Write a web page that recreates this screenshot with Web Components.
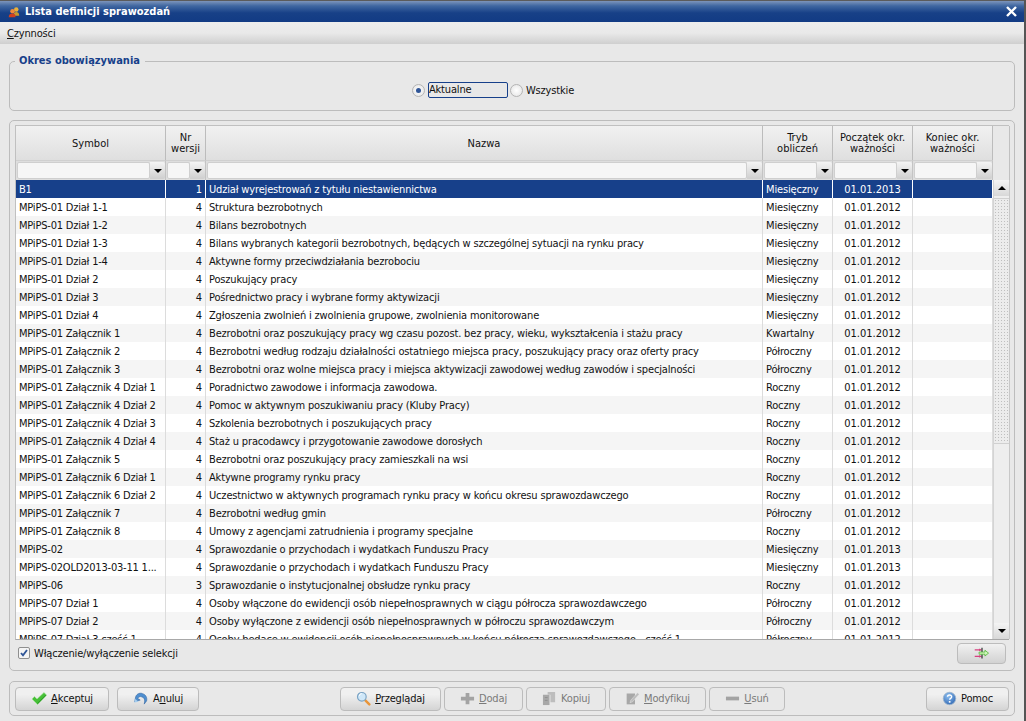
<!DOCTYPE html>
<html lang="pl">
<head>
<meta charset="utf-8">
<title>Lista definicji sprawozdań</title>
<style>
  html, body { margin: 0; height: 100%; overflow: hidden; }
  body { font: 11px "DejaVu Sans Condensed", "DejaVu Sans", sans-serif; letter-spacing: -.16px; color: #111; background: #e8e8e8; }
</style>
</head>
<body>
<report-window>
  <group-box slot="period" legend="Okres obowiązywania">
    <period-switch></period-switch>
  </group-box>
  <group-box slot="list">
    <report-table></report-table>
  </group-box>
  <action-bar slot="actions"></action-bar>
</report-window>

<script>
const ICONS = {
  ok: '<svg width="16" height="13" viewBox="0 0 16 13"><path d="M1 7l2.5-2.5L6 7l7-6.500 2.500 2.500L6.500 12.500z" fill="#47c038" stroke="#a6e09a" stroke-width=".6"/><path d="M6.500 11L14.500 3l1 .3-9 9z" fill="#2a9a24"/></svg>',
  undo: '<svg width="16" height="15" viewBox="0 0 20 18"><path d="M3 9c0-5 5-8 9-6 4 1 6 5 5 9l-3 4c1-4 1-8-3-9-2-1-4 0-5 2l3 2-7 2z" fill="#4f8fd0" stroke="#2b609e" stroke-width=".7"/><path d="M2 9v5l5-1z" fill="#a5cdee"/></svg>',
  search: '<svg width="15" height="15" viewBox="0 0 18 18"><path d="M10 10l6 6" stroke="#e8953a" stroke-width="3" stroke-linecap="round"/><circle cx="7" cy="7" r="5.200" fill="#cfe7f8" stroke="#7aa3c4" stroke-width="1.400"/><path d="M4 6a3 3 0 0 1 3-3" stroke="#fff" fill="none"/></svg>',
  plus: '<svg width="15" height="15" viewBox="0 0 16 16"><path d="M6 2h4v4h5v4h-5v4H6v-4H1V6h5z" fill="#a3a3a3"/></svg>',
  copy: '<svg width="15" height="15" viewBox="0 0 16 16"><path d="M1 4h7v11H1z" fill="#a8a8a8"/><path d="M6 1h8v11H9V4H6z" fill="#bdbdbd"/><path d="M3 7h3M3 10h3" stroke="#8e8e8e"/></svg>',
  edit: '<svg width="15" height="15" viewBox="0 0 18 18"><path d="M2 3h10v13H2z" fill="#a8a8a8"/><path d="M7 11l8-9 2 2-8 9-3 1z" fill="#bdbdbd" stroke="#e6e6e6" stroke-width=".6"/></svg>',
  minus: '<svg width="15" height="15" viewBox="0 0 16 16"><path d="M1 6h14v4H1z" fill="#a3a3a3"/></svg>',
  help: '<svg width="15" height="15" viewBox="0 0 18 18"><defs><radialGradient id="h" cx=".4" cy=".3" r=".8"><stop offset="0" stop-color="#8fc0f0"/><stop offset="1" stop-color="#2a62b0"/></radialGradient></defs><circle cx="9" cy="9" r="7.500" fill="url(#h)" stroke="#9cb4cc"/><path d="M6.600 7c0-3 5-3 5 0 0 2-2.400 1.600-2.400 3.400" fill="none" stroke="#fff" stroke-width="1.600"/><path d="M8.200 12h2v2h-2z" fill="#fff"/></svg>',
  toggle: '<svg width="16" height="15" viewBox="0 0 22 18"><path d="M1 4h9M1 13h9" stroke="#d6417f" stroke-width="1.500"/><path d="M7 2l3 2-3 2zM7 11l3 2-3 2z" fill="#d6417f"/><path d="M11 1v6M11 10v6" stroke="#111" stroke-width="1.400"/><path d="M7 7h8V4.500l5 4-5 4V10H7z" fill="#cdf5b8" stroke="#48b02e"/></svg>',
  app: '<svg width="12" height="12" viewBox="0 0 16 16"><circle cx="11" cy="4.500" r="3" fill="#e8b13a"/><path d="M7 13c0-4 2-5 4-5s4 1 4 5z" fill="#c99a2e"/><circle cx="6" cy="7" r="3" fill="#f08a3a"/><path d="M1 15c0-4 2-5 5-5s4 1 4 5z" fill="#d0401f"/></svg>'
};

class ReportWindow extends HTMLElement {
  constructor() {
    super();
    this.attachShadow({ mode: 'open' });
    this.shadowRoot.innerHTML = `
      <style>
        :host { display: flex; flex-direction: column; width: 1026px; height: 721px; background: #e8e8e8; box-sizing: border-box; border-right: 2px solid #555; }
        .title {
          height: 22px; flex: none; box-sizing: border-box; border-top: 1px solid #5b5b5b;
          display: flex; align-items: center; padding: 0 7px 0 8px; gap: 5px;
          background: linear-gradient(#7d95bb 0, #3f66a0 5px, #174087 12px, #123b84 100%);
          color: #fff; font-weight: bold; font-size: 11px; letter-spacing: 0;
        }
        .title svg { flex: none; }
        .title span { flex: 1; }
        .close { flex: none; margin-right: 0; }
        .menu {
          height: 22px; flex: none; display: flex; align-items: center; padding: 0 7px;
          background: linear-gradient(#ededed 0, #e9e9e9 50%, #cfcfcf 100%);
        }
        u { text-underline-offset: 1px; }
        .body { flex: 1; display: flex; flex-direction: column; padding: 17px 9px 6px 9px; }
        ::slotted([slot=period]) { height: 50px; flex: none; }
        ::slotted([slot=list]) { height: 551px; margin-top: 9px; flex: none; }
        ::slotted([slot=actions]) { margin-top: 10px; flex: none; }
      </style>
      <div class="title">
        ${ICONS.app}
        <span>Lista definicji sprawozdań</span>
        <svg class="close" width="11" height="11" viewBox="0 0 11 11"><path d="M1 1l9 9M10 1l-9 9" stroke="#fff" stroke-width="2.400"/></svg>
      </div>
      <div class="menu"><span><u>C</u>zynności</span></div>
      <div class="body">
        <slot name="period"></slot>
        <slot name="list"></slot>
        <slot name="actions"></slot>
      </div>`;
  }
}

class GroupBox extends HTMLElement {
  constructor() {
    super();
    this.attachShadow({ mode: 'open' });
    const legend = this.getAttribute('legend');
    this.shadowRoot.innerHTML = `
      <style>
        :host { display: block; position: relative; box-sizing: border-box; border: 1px solid #bcbcbc; border-radius: 5px; }
        .legend { position: absolute; left: 5px; top: -8px; padding: 0 5px 0 4px; background: #e8e8e8; color: #17408a; font-weight: bold; font-size: 11px; line-height: 14px; letter-spacing: 0; }
      </style>
      ${legend ? `<div class="legend">${legend}</div>` : ''}
      <slot></slot>`;
  }
}

class PeriodSwitch extends HTMLElement {
  constructor() {
    super();
    this.attachShadow({ mode: 'open' });
    this.shadowRoot.innerHTML = `
      <style>
        :host { display: flex; height: 100%; align-items: center; justify-content: center; padding: 8px 38px 0 0; box-sizing: border-box; }
        .radio { width: 11px; height: 11px; border-radius: 50%; border: 1px solid #b4b4b4; background: radial-gradient(#fff, #e2e2e2); display: flex; align-items: center; justify-content: center; flex: none; }
        .radio i { width: 5px; height: 5px; border-radius: 50%; background: #2f5597; }
        .focus { width: 78px; height: 14px; line-height: 14px; border: 1px solid #17408a; border-radius: 2px; margin: 0 2px 0 3px; box-sizing: content-box; }
        .rest { margin-left: 3px; }
      </style>
      <span class="radio"><i></i></span>
      <span class="focus">Aktualne</span>
      <span class="radio"></span>
      <span class="rest">Wszystkie</span>`;
  }
}

const COLS = '150px 40px 557px 70px 80px 80px';
const ROWS = [
  ['B1',1,'Udział wyrejestrowań z tytułu niestawiennictwa','Miesięczny','01.01.2013'],
  ['MPiPS-01 Dział 1-1',4,'Struktura bezrobotnych','Miesięczny','01.01.2012'],
  ['MPiPS-01 Dział 1-2',4,'Bilans bezrobotnych','Miesięczny','01.01.2012'],
  ['MPiPS-01 Dział 1-3',4,'Bilans wybranych kategorii bezrobotnych, będących w szczególnej sytuacji na rynku pracy','Miesięczny','01.01.2012'],
  ['MPiPS-01 Dział 1-4',4,'Aktywne formy przeciwdziałania bezrobociu','Miesięczny','01.01.2012'],
  ['MPiPS-01 Dział 2',4,'Poszukujący pracy','Miesięczny','01.01.2012'],
  ['MPiPS-01 Dział 3',4,'Pośrednictwo pracy i wybrane formy aktywizacji','Miesięczny','01.01.2012'],
  ['MPiPS-01 Dział 4',4,'Zgłoszenia zwolnień i zwolnienia grupowe, zwolnienia monitorowane','Miesięczny','01.01.2012'],
  ['MPiPS-01 Załącznik 1',4,'Bezrobotni oraz poszukujący pracy wg czasu pozost. bez pracy, wieku, wykształcenia i stażu pracy','Kwartalny','01.01.2012'],
  ['MPiPS-01 Załącznik 2',4,'Bezrobotni według rodzaju działalności ostatniego miejsca pracy, poszukujący pracy oraz oferty pracy','Półroczny','01.01.2012'],
  ['MPiPS-01 Załącznik 3',4,'Bezrobotni oraz wolne miejsca pracy i miejsca aktywizacji zawodowej według zawodów i specjalności','Półroczny','01.01.2012'],
  ['MPiPS-01 Załącznik 4 Dział 1',4,'Poradnictwo zawodowe i informacja zawodowa.','Roczny','01.01.2012'],
  ['MPiPS-01 Załącznik 4 Dział 2',4,'Pomoc w aktywnym poszukiwaniu pracy (Kluby Pracy)','Roczny','01.01.2012'],
  ['MPiPS-01 Załącznik 4 Dział 3',4,'Szkolenia bezrobotnych i poszukujących pracy','Roczny','01.01.2012'],
  ['MPiPS-01 Załącznik 4 Dział 4',4,'Staż u pracodawcy i przygotowanie zawodowe dorosłych','Roczny','01.01.2012'],
  ['MPiPS-01 Załącznik 5',4,'Bezrobotni oraz poszukujący pracy zamieszkali na wsi','Roczny','01.01.2012'],
  ['MPiPS-01 Załącznik 6 Dział 1',4,'Aktywne programy rynku pracy','Roczny','01.01.2012'],
  ['MPiPS-01 Załącznik 6 Dział 2',4,'Uczestnictwo w aktywnych programach rynku pracy w końcu okresu sprawozdawczego','Roczny','01.01.2012'],
  ['MPiPS-01 Załącznik 7',4,'Bezrobotni według gmin','Półroczny','01.01.2012'],
  ['MPiPS-01 Załącznik 8',4,'Umowy z agencjami zatrudnienia i programy specjalne','Roczny','01.01.2012'],
  ['MPiPS-02',4,'Sprawozdanie o przychodach i wydatkach Funduszu Pracy','Miesięczny','01.01.2013'],
  ['MPiPS-02OLD2013-03-11 1...',4,'Sprawozdanie o przychodach i wydatkach Funduszu Pracy','Miesięczny','01.01.2013'],
  ['MPiPS-06',3,'Sprawozdanie o instytucjonalnej obsłudze rynku pracy','Roczny','01.01.2012'],
  ['MPiPS-07 Dział 1',4,'Osoby włączone do ewidencji osób niepełnosprawnych w ciągu półrocza sprawozdawczego','Półroczny','01.01.2012'],
  ['MPiPS-07 Dział 2',4,'Osoby wyłączone z ewidencji osób niepełnosprawnych w półroczu sprawozdawczym','Półroczny','01.01.2012'],
  ['MPiPS-07 Dział 3 część 1',4,'Osoby będące w ewidencji osób niepełnosprawnych w końcu półrocza sprawozdawczego - część 1','Półroczny','01.01.2012']
];
const HEADS = ['Symbol', 'Nr<br>wersji', 'Nazwa', 'Tryb<br>obliczeń', 'Początek okr.<br>ważności', 'Koniec okr.<br>ważności'];

class ReportTable extends HTMLElement {
  constructor() {
    super();
    this.attachShadow({ mode: 'open' });
    this.shadowRoot.innerHTML = `
      <style>
        :host { display: flex; flex-direction: column; height: 100%; padding: 4px 5px 3px 5px; box-sizing: border-box; }
        .frame { display: grid; grid-template-columns: 977px 17px; grid-template-rows: 34px 20px 459px; border: 1px solid #c0c0c0; border-bottom: 1px solid #a8a8a8; border-right: 0; flex: none; }
        .heads, .filters, .row { display: grid; grid-template-columns: ${COLS}; }
        .heads { grid-area: 1 / 1; }
        .filters { grid-area: 2 / 1; }
        .corner { grid-area: 1 / 2 / span 2; background: #e8e8e8; border-right: 1px solid #c0c0c0; }
        .head { display: flex; align-items: center; justify-content: center; text-align: center; line-height: 11px; letter-spacing: 0; background: linear-gradient(#f1f1f1, #dfdfdf); border-right: 1px solid #bcbcbc; }
        .filter { display: flex; background: #dedede; padding: 1px 0 1px 1px; border-right: 1px solid #c4c4c4; box-sizing: border-box; border-top: 1px solid #d0d0d0; }
        .filter i { flex: 1; min-width: 0; background: #f6f6f6; border: 1px solid #cfcfcf; border-radius: 2px; }
        .filter b { width: 15px; flex: none; background: linear-gradient(#f4f4f4, #cfcfcf); display: flex; align-items: center; justify-content: center; border-radius: 0 2px 2px 0; }
        .filter b::after, .down::after { content: ""; border: 4px solid transparent; border-top: 4px solid #000; border-bottom: 0; }
        .rows { grid-area: 3 / 1; overflow: hidden; background: #fff; }
        .row { height: 18px; line-height: 18px; background: #fff; }
        .row:nth-child(odd) { background: #f5f5f5; }
        .row span { padding: 1px 3px 0; white-space: nowrap; overflow: hidden; border-right: 1px solid #dcdcdc; box-sizing: border-box; }
        .row span:first-child { letter-spacing: -.2px; }
        .row .n { text-align: right; }
        .row .c { text-align: center; letter-spacing: 0; }
        .row.sel, .row.sel:nth-child(odd) { background: #17408a; color: #fff; }
        .row.sel span { border-right-color: #fff; }
        .bar { grid-area: 3 / 2; display: flex; flex-direction: column; background: #eeeeee; border-left: 1px solid #d4d4d4; border-right: 1px solid #c8c8c8; box-sizing: border-box; }
        .btn { height: 16px; flex: none; background: linear-gradient(#f4f4f4, #d8d8d8); display: flex; align-items: center; justify-content: center; }
        .up::after { content: ""; border: 4px solid transparent; border-bottom: 4px solid #000; border-top: 0; }
        .thumb { height: 244px; margin-top: 2px; flex: none; border: 1px solid #d0d0d0; border-width: 1px 0; background-color: #ececec; background-image: radial-gradient(#bfbfbf .6px, transparent .7px); background-size: 3px 3px; }
        .gap { flex: 1; }
        .foot { display: flex; align-items: center; justify-content: space-between; padding: 0 0 0 3px; height: 26px; box-sizing: border-box; flex: none; }
        .check { display: flex; align-items: center; gap: 4px; }
        .box { width: 10px; height: 10px; border: 1px solid #8f8f8f; border-radius: 2px; background: #f4f4f4; display: flex; }
        .tog { width: 49px; height: 21px; margin-right: 3px; box-sizing: border-box; border: 1px solid #bcbcbc; border-radius: 4px; background: linear-gradient(#f1f1f1, #d2d2d2); display: flex; align-items: center; justify-content: center; }
      </style>
      <div class="frame">
        <div class="heads">${HEADS.map(h => `<div class="head"><span>${h}</span></div>`).join('')}</div>
        <div class="corner"></div>
        <div class="filters">${HEADS.map(() => '<div class="filter"><i></i><b></b></div>').join('')}</div>
        <div class="rows">${ROWS.map((r, i) => `
          <div class="row${i === 0 ? ' sel' : ''}">
            <span>${r[0]}</span><span class="n">${r[1]}</span><span>${r[2]}</span><span>${r[3]}</span><span class="c">${r[4]}</span><span></span>
          </div>`).join('')}</div>
        <div class="bar">
          <div class="btn up"></div>
          <div class="thumb"></div>
          <div class="gap"></div>
          <div class="btn down"></div>
        </div>
      </div>
      <div class="foot">
        <div class="check">
          <span class="box"><svg width="10" height="10" viewBox="0 0 10 10"><path d="M2 5l2 2.400L8 2" fill="none" stroke="#2f5597" stroke-width="1.800"/></svg></span>
          <span>Włączenie/wyłączenie selekcji</span>
        </div>
        <div class="tog">${ICONS.toggle}</div>
      </div>`;
  }
}

class ToolButton extends HTMLElement {
  constructor() {
    super();
    this.attachShadow({ mode: 'open' });
    this.shadowRoot.innerHTML = `
      <style>
        :host { display: inline-flex; align-items: center; justify-content: center; gap: 4px; box-sizing: border-box; height: 24px; border: 1px solid #bcbcbc; border-radius: 4px; background: linear-gradient(#f0f0f0, #f0f0f0 30%, #d4d4d4); }
        :host([disabled]) { background: #e8e8e8; color: #7a7a7a; }
        ::slotted(u) { text-underline-offset: 1px; }
        svg { display: block; }
      </style>
      ${ICONS[this.getAttribute('icon')] || ''}
      <span><slot></slot></span>`;
  }
}

class ActionBar extends HTMLElement {
  constructor() {
    super();
    this.attachShadow({ mode: 'open' });
    this.shadowRoot.innerHTML = `
      <style>
        :host { display: flex; align-items: center; height: 35px; box-sizing: border-box; border: 1px solid #bcbcbc; border-radius: 5px; padding: 0 5px; }
        .left, .mid { display: flex; gap: 8px; }
        .mid { gap: 3px; margin-left: 141px; }
        .end { margin-left: auto; }
      </style>
      <div class="left">
        <tool-button icon="ok" style="width:94px"><u>A</u>kceptuj</tool-button>
        <tool-button icon="undo" style="width:82px">A<u>n</u>uluj</tool-button>
      </div>
      <div class="mid">
        <tool-button icon="search" style="width:101px"><u>P</u>rzeglądaj</tool-button>
        <tool-button icon="plus" disabled style="width:79px"><u>D</u>odaj</tool-button>
        <tool-button icon="copy" disabled style="width:80px">Kopiuj</tool-button>
        <tool-button icon="edit" disabled style="width:97px"><u>M</u>odyfikuj</tool-button>
        <tool-button icon="minus" disabled style="width:76px"><u>U</u>suń</tool-button>
      </div>
      <tool-button class="end" icon="help" style="width:83px;margin-right:0">Pomoc</tool-button>`;
  }
}

customElements.define('report-window', ReportWindow);
customElements.define('group-box', GroupBox);
customElements.define('period-switch', PeriodSwitch);
customElements.define('report-table', ReportTable);
customElements.define('tool-button', ToolButton);
customElements.define('action-bar', ActionBar);
</script>
</body>
</html>
